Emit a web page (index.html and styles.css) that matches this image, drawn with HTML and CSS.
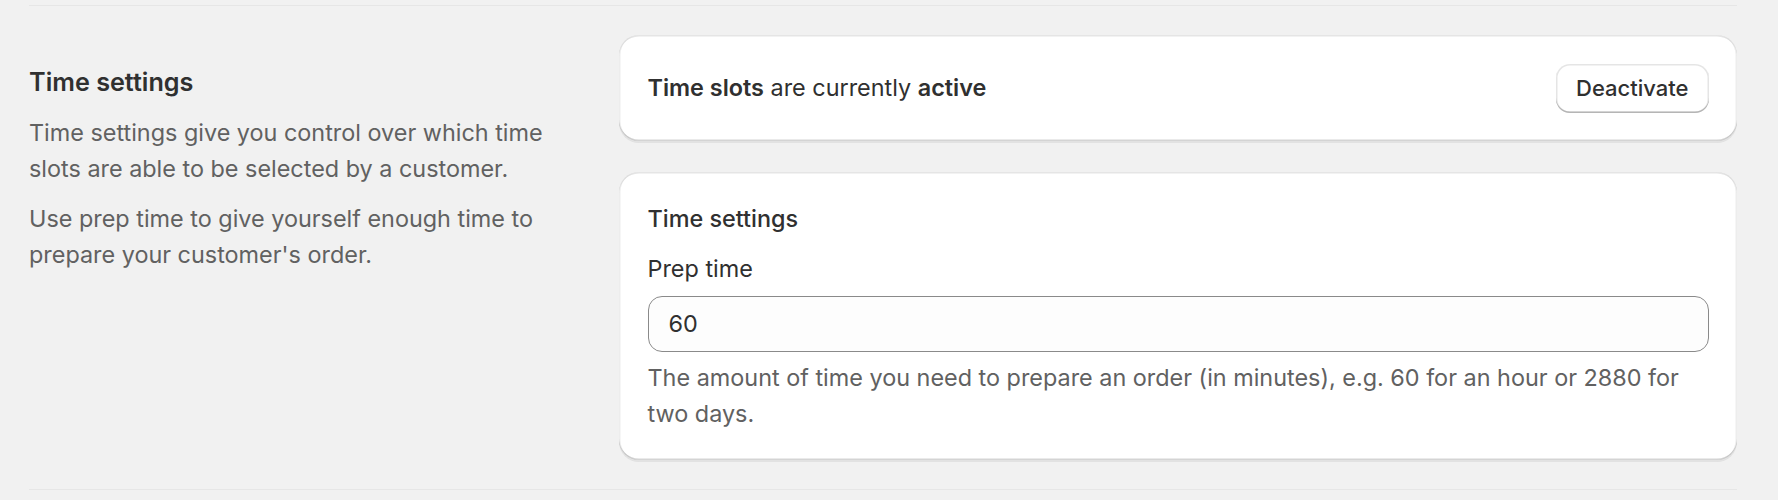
FILE: index.html
```html
<!DOCTYPE html>
<html lang="en">
<head>
    <meta charset="UTF-8">
    <meta name="viewport" content="width=device-width, initial-scale=1.0">
    <title>Time settings</title>
    <link rel="stylesheet" href="styles.css">
</head>
<body>

    <div class="section">
        <div class="annotation">
            <h2 class="annotation-title">Time settings</h2>
            <p>Time settings give you control over which time slots are able to be selected by a customer.</p>
            <p>Use prep time to give yourself enough time to prepare your customer's order.</p>
        </div>

        <div class="content">
            <div class="card status-card">
                <span class="status-text"><strong>Time slots</strong> are currently <strong>active</strong></span>
                <button class="btn">Deactivate</button>
            </div>

            <div class="card">
                <h3 class="card-title">Time settings</h3>
                <label class="field-label" for="prep">Prep time</label>
                <input class="text-field" id="prep" type="text" value="60">
                <p class="help-text">The amount of time you need to prepare an order (in minutes), e.g. 60 for an hour or 2880 for two days.</p>
            </div>
        </div>
    </div>

</body>
</html>
```

FILE: styles.css
```css
body {
    font-family: Inter, "Noto Sans", Arial, sans-serif;
    background-color: #f1f1f1;
    color: #303030;
    margin: 0;
    padding: 5px 41px 0 29px;
    font-size: 23.4px;
    line-height: 36px;
}

.section {
    display: grid;
    grid-template-columns: 1fr 2fr;
    gap: 31px;
    border-top: 1px solid #e6e6e6;
    border-bottom: 1px solid #e6e6e6;
    padding: 29px 0 29px;
}

.annotation {
    padding-top: 29px;
    color: #616161;
}

.annotation-title {
    font-size: 25.2px;
    font-weight: 600;
    color: #303030;
    margin: 0 0 15px;
    line-height: 36px;
}

.annotation p {
    margin: 0 0 14px;
}

.content {
    display: flex;
    flex-direction: column;
    gap: 31px;
}

.card {
    background-color: #ffffff;
    border-radius: 20px;
    padding: 28.5px;
    box-shadow:
        0 2px 0 0 rgba(26, 26, 26, 0.07),
        inset 0 -1.5px 0 0 rgba(0, 0, 0, 0.17),
        inset 0 1.5px 0 0 rgba(204, 204, 204, 0.5),
        inset 1.5px 0 0 0 rgba(0, 0, 0, 0.07),
        inset -1.5px 0 0 0 rgba(0, 0, 0, 0.07);
}

.status-card {
    display: flex;
    justify-content: space-between;
    align-items: center;
}

.status-text strong {
    font-weight: 600;
}

.btn {
    font-family: inherit;
    font-size: 22px;
    font-weight: 500;
    color: #303030;
    background-color: #ffffff;
    border: none;
    border-radius: 14px;
    height: 49px;
    padding: 0 20px;
    box-shadow:
        inset 0 -1.5px 0 0 #b5b5b5,
        inset 0 0 0 1.5px rgba(0, 0, 0, 0.1),
        inset 0 1px 0 2px #ffffff;
    cursor: pointer;
}

.card-title {
    font-size: 23.4px;
    font-weight: 550;
    line-height: 36px;
    margin: 0 0 14px;
}

.field-label {
    display: block;
    margin-bottom: 9px;
}

.text-field {
    display: block;
    box-sizing: border-box;
    width: 100%;
    height: 56px;
    font-family: inherit;
    font-size: 23.4px;
    color: #303030;
    background-color: #fdfdfd;
    border: 1.5px solid #8a8a8a;
    border-radius: 14px;
    padding: 0 20px;
    outline: none;
}

.help-text {
    color: #616161;
    margin: 8px 0 0;
}
```
